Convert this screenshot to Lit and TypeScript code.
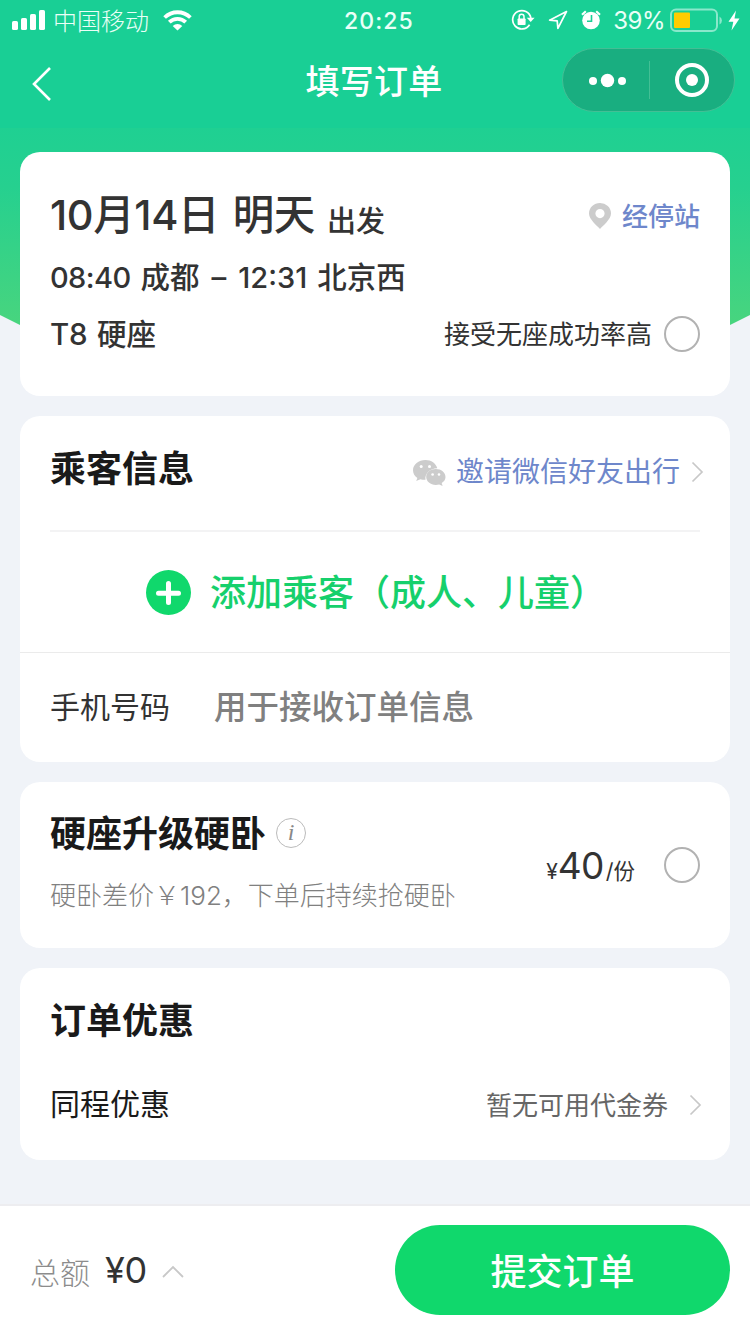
import { LitElement, html, css } from "lit";
import { customElement } from "lit/decorators.js";

const textStyles = css`
  :host { display: block; }
  * { box-sizing: border-box; }
  svg { display: block; flex: none; }
  .row { display: flex; align-items: center; white-space: nowrap; }
  .between { justify-content: space-between; }
  .num { font-family: "Inter", "Noto Sans CJK SC", sans-serif; }
`;

const chevron = () => html`<svg width="13" height="22" viewBox="0 0 13 22" fill="none" stroke="#c8c8c8" stroke-width="1.700"><path d="M1.500 1.500 11 11 1.500 20.500"/></svg>`;

@customElement("status-bar")
class StatusBar extends LitElement {
  static styles = [textStyles, css`
    .bar { height: 40px; display: grid; grid-template-columns: 1fr auto 1fr; align-items: center; color: #eafff7; padding: 0 10px 0 12px; }
    .carrier { font-size: 24px; line-height: 40px; margin: 0 14px 0 7px; font-weight: 300; }
    .time { font-size: 23px; font-weight: 500; line-height: 38px; letter-spacing: 1.1px; padding: 2px 0 0 6px; }
    .right { justify-content: flex-end; }
    .arrow { margin-left: 13px; }
    .alarm { margin-left: 13px; }
    .pct { font-size: 24px; letter-spacing: -0.5px; line-height: 38px; margin: 0 5px 0 12px; padding-top: 2px; }
  `];
  render() {
    return html`<div class="bar">
      <div class="row">
        <svg width="34" height="20" viewBox="0 0 34 20" fill="#fff"><rect x="0" y="11" width="6" height="9" rx="1.600"/><rect x="9" y="8" width="6" height="12" rx="1.600"/><rect x="18" y="4" width="6" height="16" rx="1.600"/><rect x="27" y="0" width="6" height="20" rx="1.600"/></svg>
        <span class="carrier">中国移动</span>
        <svg width="29" height="21" viewBox="0 0 29 21" fill="none" stroke="#fff" stroke-width="3.800"><path d="M1.600 7.500a18.500 18.500 0 0 1 25.800 0"/><path d="M6.300 12.200a11.700 11.700 0 0 1 16.400 0"/><path d="M14.500 20.600 9.700 15.900a7 7 0 0 1 9.600 0z" fill="#fff" stroke="none"/></svg>
      </div>
      <span class="time num">20:25</span>
      <div class="row right">
        <svg width="24" height="22" viewBox="0 0 24 22" fill="none" stroke="#fff" stroke-width="1.700"><path d="M18.600 15.800A9.200 9.200 0 1 1 19.900 9"/><path d="M15.800 8.800h7.800L19.700 13z" fill="#fff" stroke="none"/><rect x="6.600" y="9.500" width="8" height="6.500" rx=".8" fill="#fff" stroke="none"/><path d="M8.200 10V7.600a2.400 2.400 0 0 1 4.800 0V10" stroke-width="1.500"/></svg>
        <svg class="arrow" width="20" height="20" viewBox="0 0 20 20" fill="none" stroke="#fff" stroke-width="1.700" stroke-linejoin="round"><path d="M18.500 1.500 1.600 10.200l7.600.6.700 7.600z"/></svg>
        <svg class="alarm" width="20" height="20" viewBox="0 0 20 20"><circle cx="10" cy="10.500" r="8.800" fill="#fff"/><path d="M1 4.800 4.800 1.300M19 4.800l-3.800-3.500" stroke="#fff" stroke-width="2.200"/><path d="M10.500 5v6.200H6" fill="none" stroke="#19cf95" stroke-width="1.600"/></svg>
        <span class="pct num">39%</span>
        <svg width="70" height="24" viewBox="0 0 70 24"><rect x="1" y="1.500" width="46" height="21.500" rx="5" fill="none" stroke="#8ae8cb" stroke-width="2"/><rect x="4" y="4.500" width="16" height="15.500" rx="1" fill="#ffcc00"/><path d="M49.500 8.500a4.500 4.500 0 0 1 0 8z" fill="#8ae8cb"/><path d="M66 2.500 58.500 13.700h4.800L61.500 22.500l8-12h-5z" fill="#fff"/></svg>
      </div>
    </div>`;
  }
}

@customElement("title-bar")
class TitleBar extends LitElement {
  static styles = [textStyles, css`
    .bar { height: 88px; display: grid; grid-template-columns: 1fr auto 1fr; align-items: center; padding: 0 15px 8px; }
    .title { color: #fff; font-size: 34px; line-height: 48px; font-weight: 500; letter-spacing: .3px; padding: 0 2px 1px 0; }
    .back { margin: 8px 0 0 17px; }
    .capsule { justify-self: end; width: 173px; height: 64px; border: 1px solid #43bf95; border-radius: 32px; background: #19ae80; justify-content: space-around; }
    .split { width: 1px; height: 38px; background: #43bf95; }
  `];
  render() {
    return html`<div class="bar">
      <svg class="back" width="20" height="34" viewBox="0 0 20 34" fill="none" stroke="#fff" stroke-width="2.600"><path d="M18 1 2 17l16 16"/></svg>
      <span class="title">填写订单</span>
      <div class="row capsule">
        <svg width="86" height="40" viewBox="0 0 86 40" fill="#fff"><circle cx="30" cy="21" r="4"/><circle cx="44.500" cy="20.500" r="6.700"/><circle cx="59" cy="21" r="4"/></svg>
        <div class="split"></div>
        <svg width="84" height="40" viewBox="0 0 84 40"><circle cx="42" cy="20" r="15" fill="none" stroke="#fff" stroke-width="4"/><circle cx="42" cy="20" r="6" fill="#fff"/></svg>
      </div>
    </div>`;
  }
}

@customElement("round-check")
class RoundCheck extends LitElement {
  static styles = css`:host { display: block; flex: none; width: 36px; height: 36px; box-sizing: border-box; border: 2px solid #b2b2b2; border-radius: 50%; }`;
}

@customElement("trip-card")
class TripCard extends LitElement {
  static styles = [textStyles, css`
    .card { height: 244px; padding: 34px 30px 0; background: #fff; border-radius: 20px; color: #333; font-weight: 500; }
    .date { height: 60px; }
    .day { font-size: 41.500px; line-height: 60px; padding-bottom: 2px; letter-spacing: -.4px; word-spacing: 3px; }
    .go { font-size: 29px; line-height: 60px; margin-left: 12px; padding-top: 5px; }
    .stops { color: #6e87cb; font-size: 26px; line-height: 60px; margin-left: 11px; padding-bottom: 2px; }
    .line { font-size: 29.500px; height: 64px; line-height: 62px; align-items: baseline; }
    .clock { font-size: 29px; letter-spacing: -.6px; }
    .place { margin: 0 12px 0 10px; }
    .arrive { margin-left: 12px; letter-spacing: 0; }
    .dest { margin-left: 10px; }
    .seat { height: 48px; font-size: 29.500px; }
    .train { padding-bottom: 5px; word-spacing: 2px; letter-spacing: -.2px; }
    .tip { font-size: 26px; font-weight: 400; margin-right: 12px; padding-bottom: 3px; }
  `];
  render() {
    return html`<div class="card">
      <div class="row between date">
        <div class="row"><span class="day num">10月14日 明天</span><span class="go">出发</span></div>
        <div class="row"><svg width="22" height="26" viewBox="0 0 22 26"><path fill="#ccc" fill-rule="evenodd" d="M11 26C8 22.500 0 16.500 0 10.500a11 10.500 0 0 1 22 0C22 16.500 14 22.500 11 26zM11 6a4.600 4.600 0 1 0 0 9.200A4.600 4.600 0 0 0 11 6z"/></svg><span class="stops">经停站</span></div>
      </div>
      <div class="row line num"><span class="clock">08:40</span><span class="place">成都</span><span>–</span><span class="clock arrive">12:31</span><span class="dest">北京西</span></div>
      <div class="row between seat"><span class="train num">T8 硬座</span><div class="row"><span class="tip">接受无座成功率高</span><round-check></round-check></div></div>
    </div>`;
  }
}

@customElement("passenger-card")
class PassengerCard extends LitElement {
  static styles = [textStyles, css`
    .card { height: 346px; background: #fff; border-radius: 20px; color: #1a1a1a; }
    .head { height: 116px; margin: 0 30px; padding-bottom: 9px; border-bottom: 2px solid #f3f3f4; }
    .title { font-size: 36px; font-weight: 700; padding-bottom: 5px; }
    .invite { color: #6e87cb; font-size: 28px; margin: 0 11px 0 10px; padding-bottom: 4px; }
    .wechat { margin-top: 3px; }
    .right { margin: 6px -4px 0 0; }
    .add { height: 121px; border-bottom: 1px solid #ebebeb; padding-left: 126px; color: #16d06c; font-size: 36px; font-weight: 500; }
    .add span { margin-left: 19px; padding-bottom: 5px; }
    .phone { height: 108px; padding: 0 30px 5px; font-size: 30px; color: #333; }
    .hint { font-size: 32.500px; font-weight: 500; color: #808080; margin-left: 44px; }
  `];
  render() {
    return html`<div class="card">
      <div class="row between head">
        <span class="title">乘客信息</span>
        <div class="row right">
          <svg class="wechat" width="33" height="26" viewBox="0 0 33 26" fill="#ccc"><path d="M12.500 0C5.600 0 0 4.500 0 10.200c0 3.200 1.700 6 4.400 7.900L3.200 21l4.200-1.800c1.600.5 3.400.7 5.100.6-1-6.300 4.600-11.500 11.800-11.600C23 3.500 18.300 0 12.500 0z"/><path d="M32.500 17c0-4.400-4.300-7.900-9.700-7.900s-9.600 3.500-9.600 7.900 4.300 7.900 9.600 7.900c1.200 0 2.400-.2 3.400-.5L29.600 26l-.9-2.900c2.400-1.500 3.800-3.600 3.800-6.100z"/><g fill="#fff"><circle cx="8.200" cy="6.500" r="1.500"/><circle cx="16.500" cy="6.500" r="1.500"/><circle cx="19.600" cy="14.500" r="1.300"/><circle cx="26" cy="14.500" r="1.300"/></g></svg>
          <span class="invite">邀请微信好友出行</span>${chevron()}
        </div>
      </div>
      <div class="row add"><svg width="45" height="45" viewBox="0 0 45 45"><circle cx="22.500" cy="22.500" r="22.500" fill="#10d86c"/><path d="M22.500 13.500v19M12.500 23.300h20" stroke="#fff" stroke-width="5" stroke-linecap="round"/></svg><span>添加乘客（成人、儿童）</span></div>
      <div class="row phone">手机号码<span class="hint">用于接收订单信息</span></div>
    </div>`;
  }
}

@customElement("upgrade-card")
class UpgradeCard extends LitElement {
  static styles = [textStyles, css`
    .card { height: 166px; padding: 0 30px; background: #fff; border-radius: 20px; }
    .title { font-size: 36px; line-height: 52px; font-weight: 700; color: #1a1a1a; margin: -6px 10px 0 0; }
    .desc { font-size: 26px; line-height: 40px; font-weight: 300; color: #808080; margin-top: 17px; white-space: nowrap; }
    .left { padding-bottom: 3px; }
    .price { color: #333; align-items: baseline; margin-right: 29px; }
    .yen { font-size: 21px; }
    .amt { font-size: 37px; letter-spacing: -.6px; }
    .per { font-size: 21.500px; padding-left: 2px; }
    .info { width: 30px; height: 30px; border: 1px solid #bbb; border-radius: 50%; text-align: center; font: italic 24px/27px "Liberation Serif", serif; color: #888; margin-top: -2px; }
  `];
  render() {
    return html`<div class="row between card">
      <div class="left"><div class="row"><span class="title">硬座升级硬卧</span><span class="info">i</span></div>
      <div class="desc">硬卧差价￥<span class="num">192</span>，下单后持续抢硬卧</div></div>
      <div class="row"><div class="row price num"><span class="yen">¥</span><span class="amt">40</span><span class="per">/份</span></div><round-check></round-check></div>
    </div>`;
  }
}

@customElement("discount-card")
class DiscountCard extends LitElement {
  static styles = [textStyles, css`
    .card { height: 192px; padding: 24px 30px 0; background: #fff; border-radius: 20px; color: #1a1a1a; }
    .title { font-size: 36px; line-height: 52px; font-weight: 700; }
    .line { height: 60px; margin: 31px -2px 0 0; font-size: 30px; }
    .name { padding-bottom: 6px; }
    .none { color: #666; font-size: 26px; margin-right: 21px; padding-bottom: 3px; }
  `];
  render() {
    return html`<div class="card"><div class="title">订单优惠</div>
      <div class="row between line"><span class="name">同程优惠</span><div class="row"><span class="none">暂无可用代金券</span>${chevron()}</div></div></div>`;
  }
}

@customElement("submit-bar")
class SubmitBar extends LitElement {
  static styles = [textStyles, css`
    .bar { height: 130px; background: #fff; border-top: 2px solid #ededf0; padding: 0 20px 0 30px; }
    .total { color: #8c8c8c; font-size: 30px; font-weight: 300; margin-top: 2px; }
    .amt { color: #333; font-size: 36px; margin: 0 15px 0 15px; letter-spacing: -.4px; }
    .up { margin-top: 3px; }
    .button { width: 335px; height: 90px; border: 0; border-radius: 45px; background: #10d86c; color: #fff; font: 500 36px "Noto Sans CJK SC", sans-serif; padding: 0 0 3px; }
  `];
  render() {
    return html`<div class="row between bar">
      <div class="row"><span class="total">总额</span><span class="amt num">¥0</span><svg class="up" width="22" height="13" viewBox="0 0 22 13" fill="none" stroke="#c8c8c8" stroke-width="1.800"><path d="M1 12 11 2l10 10"/></svg></div>
      <button class="button">提交订单</button>
    </div>`;
  }
}

@customElement("app-root")
class AppRoot extends LitElement {
  static styles = css`
    :host { display: block; font-family: "Noto Sans CJK SC", sans-serif; }
    .page { width: 750px; height: 1334px; display: flex; flex-direction: column; background: #f0f3f8; overflow: hidden; }
    .top { background: #19cf95; height: 128px; flex: none; }
    .body { flex: 1; position: relative; }
    .hero { position: absolute; left: 0; top: 0; display: block; }
    .cards { position: relative; display: flex; flex-direction: column; gap: 20px; padding: 24px 20px 0; }
  `;
  render() {
    return html`<div class="page">
      <div class="top"><status-bar></status-bar><title-bar></title-bar></div>
      <div class="body">
        <svg class="hero" width="750" height="260" viewBox="0 0 750 260"><defs><linearGradient id="g" x1="0" y1="0" x2="0" y2="1"><stop offset="0" stop-color="#1fd092"/><stop offset=".25" stop-color="#26d08f"/><stop offset="1" stop-color="#52d679"/></linearGradient></defs><path fill="url(#g)" d="M0 0H750V187L730 197Q375 280 20 197L0 187z"/></svg>
        <div class="cards"><trip-card></trip-card><passenger-card></passenger-card><upgrade-card></upgrade-card><discount-card></discount-card></div>
      </div>
      <submit-bar></submit-bar>
    </div>`;
  }
}
